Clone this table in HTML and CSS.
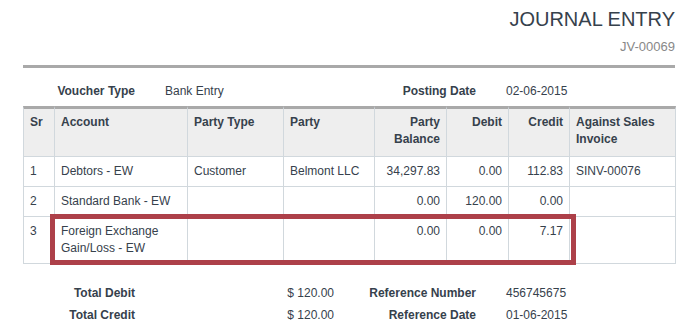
FILE: index.html
```html
<!DOCTYPE html>
<html lang="en">
<head>
<meta charset="utf-8">
<title>Journal Entry</title>
<link rel="stylesheet" href="styles.css">
</head>
<body>
<div class="page">
  <h1 class="title">JOURNAL ENTRY</h1>
  <div class="doc-name">JV-00069</div>
  <hr class="rule">

  <div class="info">
    <div class="half">
      <div class="label">Voucher Type</div>
      <div class="value">Bank Entry</div>
    </div>
    <div class="half">
      <div class="label">Posting Date</div>
      <div class="value">02-06-2015</div>
    </div>
  </div>

  <div class="table-wrap">
    <table class="accounts">
      <thead>
        <tr>
          <th class="c-sr">Sr</th>
          <th class="c-acc">Account</th>
          <th class="c-ptype">Party Type</th>
          <th class="c-party">Party</th>
          <th class="c-bal num">Party Balance</th>
          <th class="c-debit num">Debit</th>
          <th class="c-credit num">Credit</th>
          <th class="c-inv">Against Sales Invoice</th>
        </tr>
      </thead>
      <tbody>
        <tr>
          <td>1</td>
          <td>Debtors - EW</td>
          <td>Customer</td>
          <td>Belmont LLC</td>
          <td class="num">34,297.83</td>
          <td class="num">0.00</td>
          <td class="num">112.83</td>
          <td>SINV-00076</td>
        </tr>
        <tr>
          <td>2</td>
          <td>Standard Bank - EW</td>
          <td></td>
          <td></td>
          <td class="num">0.00</td>
          <td class="num">120.00</td>
          <td class="num">0.00</td>
          <td></td>
        </tr>
        <tr>
          <td>3</td>
          <td>Foreign Exchange Gain/Loss - EW</td>
          <td></td>
          <td></td>
          <td class="num">0.00</td>
          <td class="num">0.00</td>
          <td class="num">7.17</td>
          <td></td>
        </tr>
      </tbody>
    </table>
    <div class="highlight"></div>
  </div>

  <div class="totals">
    <div class="info">
      <div class="half">
        <div class="label">Total Debit</div>
        <div class="value num">$ 120.00</div>
      </div>
      <div class="half">
        <div class="label">Reference Number</div>
        <div class="value">456745675</div>
      </div>
    </div>
    <div class="info">
      <div class="half">
        <div class="label">Total Credit</div>
        <div class="value num">$ 120.00</div>
      </div>
      <div class="half">
        <div class="label">Reference Date</div>
        <div class="value">01-06-2015</div>
      </div>
    </div>
  </div>
</div>
</body>
</html>
```

FILE: styles.css
```css
html, body {
  margin: 0;
  padding: 0;
  background: #ffffff;
}

body {
  font-family: "Liberation Sans", Arial, Helvetica, sans-serif;
  font-size: 12px;
  line-height: 17px;
  color: #36414c;
}

.page {
  width: 653px;
  padding: 8px 0 0 23px;
}

.title {
  margin: 0;
  font-size: 20px;
  line-height: 22px;
  font-weight: normal;
  text-align: right;
  color: #36414c;
  padding-right: 1px;
}

.doc-name {
  margin-top: 8px;
  font-size: 13px;
  line-height: 18px;
  text-align: right;
  color: #888888;
  padding-right: 1px;
}

.rule {
  margin: 9px 0 0 0;
  border: 0;
  height: 3px;
  width: 652px;
  background: #a9a9a9;
}

.info {
  display: grid;
  grid-template-columns: 311px 311px;
  column-gap: 30px;
  margin-top: 15px;
  margin-bottom: 6px;
}

.half {
  display: grid;
  grid-template-columns: 112px 1fr;
  column-gap: 30px;
}

.label {
  font-weight: bold;
  text-align: right;
}

.num {
  text-align: right;
}

.table-wrap {
  position: relative;
}

.accounts {
  border-collapse: separate;
  border-spacing: 0;
  table-layout: fixed;
  width: 653px;
}

.accounts th,
.accounts td {
  box-sizing: border-box;
  border-right: 1px solid #d1d8dd;
  border-bottom: 1px solid #d1d8dd;
  padding: 6px 6px;
  vertical-align: top;
  text-align: left;
}

.accounts th.num,
.accounts td.num {
  text-align: right;
}

.accounts th:first-child,
.accounts td:first-child {
  border-left: 1px solid #d1d8dd;
}

.accounts th {
  font-weight: bold;
  background: #eeeeee;
  border-top: 3px solid #a9a9a9;
  padding-top: 5px;
  padding-bottom: 8px;
}

.c-sr { width: 32px; }
.c-acc { width: 133px; }
.c-ptype { width: 96px; }
.c-party { width: 91px; }
.c-bal { width: 72px; }
.c-debit { width: 62px; }
.c-credit { width: 61px; }
.c-inv { width: 106px; }

.highlight {
  position: absolute;
  left: 27px;
  top: 108px;
  width: 526px;
  height: 51px;
  box-sizing: border-box;
  border: 5px solid #ad4049;
}

.totals {
  margin-top: 21px;
}

.totals .info {
  margin-top: 0;
  margin-bottom: 5px;
}
```
